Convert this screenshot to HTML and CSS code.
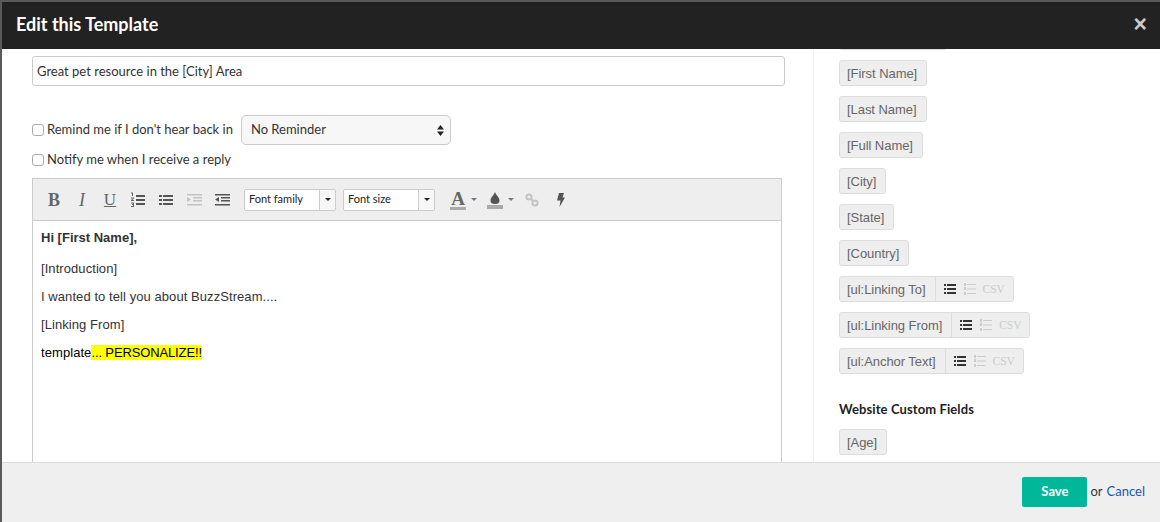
FILE: index.html
```html
<!DOCTYPE html>
<html lang="en">
<head>
<meta charset="utf-8">
<title>Edit this Template</title>
<link rel="stylesheet" href="styles.css">
</head>
<body>
<div class="modal">
  <header class="modal-head">
    <h1>Edit this Template</h1>
    <span class="close">×</span>
  </header>
  <div class="modal-body">
    <main class="main">
      <input class="subject" type="text" value="Great pet resource in the [City] Area">
      <div class="opt-row first">
        <label class="check"><input type="checkbox"><span>Remind me if I don't hear back in</span></label>
        <div class="select"><span>No Reminder</span>
          <svg class="updown" width="7" height="11" viewBox="0 0 7 11"><path d="M3.5 0 7 4.400H0zM3.500 11 0 6.600h7z" fill="#222"/></svg>
        </div>
      </div>
      <div class="opt-row second">
        <label class="check"><input type="checkbox"><span>Notify me when I receive a reply</span></label>
      </div>
      <div class="editor">
        <div class="toolbar">
          <span class="ti glyph bold">B</span>
          <span class="ti glyph ital">I</span>
          <span class="ti glyph under">U</span>
          <svg class="ti" width="16" height="16" viewBox="0 0 16 16" fill="#555"><path d="M6 3h9v2H6zM6 7h9v2H6zM6 11h9v2H6z"/><path d="M1 .5h2V4H2V1.500H1zM1 5.500h3v1L2.300 8H4v1H1V8l2-1.500H1zM1 10.500h3V15H1v-1h2v-1H2v-1h1v-.5H1z" fill="#666"/></svg>
          <svg class="ti" width="16" height="16" viewBox="0 0 16 16" fill="#555"><path d="M5 3h10v2H5zM5 7h10v2H5zM5 11h10v2H5zM1 3h3v2H1zM1 7h3v2H1zM1 11h3v2H1z"/></svg>
          <svg class="ti" width="16" height="16" viewBox="0 0 16 16" fill="#c4c4c4"><path d="M1 2h15v1.500H1zM7 5h9v1.500H7zM7 8h9v1.500H7zM1 12h15v1.500H1zM1 5l4 2.500L1 10z"/></svg>
          <svg class="ti" width="16" height="16" viewBox="0 0 16 16" fill="#555"><path d="M1 2h15v1.500H1zM7 5h9v1.500H7zM7 8h9v1.500H7zM1 12h15v1.500H1zM5 5 1 7.500 5 10z"/></svg>
          <div class="combo family"><span>Font family</span><b><i></i></b></div>
          <div class="combo size"><span>Font size</span><b><i></i></b></div>
          <span class="swatch text-color"><span class="serif-a">A</span></span>
          <i class="caret"></i>
          <svg class="drop" width="16" height="20" viewBox="0 0 16 20"><path d="M8 2C9 5 12.500 7.500 12.500 10.500a4.500 3.500 0 0 1-9 0C3.500 7.500 7 5 8 2z" fill="#555"/><rect y="15" width="16" height="4" fill="#aaa"/></svg>
          <i class="caret second-caret"></i>
          <svg class="link" width="14" height="14" viewBox="0 0 14 14" fill="none" stroke="#c4c4c4" stroke-width="2"><circle cx="4" cy="4" r="2.600"/><circle cx="10" cy="10" r="2.600"/><path d="m5.500 5.500 3 3"/></svg>
          <svg class="bolt" width="8" height="14" viewBox="0 0 8 14"><path d="M2 0h5L5.500 4.500H8L2.500 14 3.500 7.500H0z" fill="#555"/></svg>
        </div>
        <div class="content">
          <p class="hello">Hi [First Name],</p>
          <p>[Introduction]</p>
          <p>I wanted to tell you about BuzzStream....</p>
          <p>[Linking From]</p>
          <p class="black">template<mark>... PERSONALIZE!!</mark></p>
        </div>
      </div>
    </main>
    <aside class="side">
      <div class="tag clipped">[Email Address]</div>
      <div class="tag">[First Name]</div>
      <div class="tag">[Last Name]</div>
      <div class="tag">[Full Name]</div>
      <div class="tag">[City]</div>
      <div class="tag">[State]</div>
      <div class="tag">[Country]</div>
      <div class="tag list"><span class="name">[ul:Linking To]</span><span class="fmt"><svg width="12" height="10" viewBox="0 0 12 10" fill="#333"><path d="M0 0h2v2H0zM3 0h9v2H3zM0 4h2v2H0zM3 4h9v2H3zM0 8h2v2H0zM3 8h9v2H3z"/></svg><svg width="12" height="12" viewBox="0 0 12 12" fill="#ccc"><path d="M3 1h9v1H3zM3 5.500h9v1H3zM3 10h9v1H3zM0 0h2v3H0zM0 4h2v3H0zM0 9h2v3H0z"/></svg><em>CSV</em></span></div>
      <div class="tag list"><span class="name">[ul:Linking From]</span><span class="fmt"><svg width="12" height="10" viewBox="0 0 12 10" fill="#333"><path d="M0 0h2v2H0zM3 0h9v2H3zM0 4h2v2H0zM3 4h9v2H3zM0 8h2v2H0zM3 8h9v2H3z"/></svg><svg width="12" height="12" viewBox="0 0 12 12" fill="#ccc"><path d="M3 1h9v1H3zM3 5.500h9v1H3zM3 10h9v1H3zM0 0h2v3H0zM0 4h2v3H0zM0 9h2v3H0z"/></svg><em>CSV</em></span></div>
      <div class="tag list"><span class="name">[ul:Anchor Text]</span><span class="fmt"><svg width="12" height="10" viewBox="0 0 12 10" fill="#333"><path d="M0 0h2v2H0zM3 0h9v2H3zM0 4h2v2H0zM3 4h9v2H3zM0 8h2v2H0zM3 8h9v2H3z"/></svg><svg width="12" height="12" viewBox="0 0 12 12" fill="#ccc"><path d="M3 1h9v1H3zM3 5.500h9v1H3zM3 10h9v1H3zM0 0h2v3H0zM0 4h2v3H0zM0 9h2v3H0z"/></svg><em>CSV</em></span></div>
      <h2>Website Custom Fields</h2>
      <div class="tag">[Age]</div>
    </aside>
  </div>
  <footer class="modal-foot">
    <button class="save" type="button">Save</button>
    <span class="or">or <a href="#">Cancel</a></span>
  </footer>
</div>
</body>
</html>
```

FILE: styles.css
```css
* { box-sizing: border-box; }
html, body { margin: 0; height: 100%; overflow: hidden; }
body { background: #5a5a5a; padding: 2px 0 0 2px; font-family: Lato, "Open Sans", sans-serif; font-size: 13px; color: #333; }
.modal { display: flex; flex-direction: column; height: 520px; background: #fff; }
.modal-head { flex: none; height: 47px; background: #222; color: #fff; display: flex; align-items: center; justify-content: space-between; padding: 0 13px 3px 14px; }
.modal-head h1 { margin: 0; font-size: 18px; font-weight: 700; }
.close { font-family: "Liberation Sans", sans-serif; font-size: 23px; font-weight: 700; color: #ccc; line-height: 1; }
.modal-body { flex: none; height: 413px; display: flex; overflow: hidden; }
.main { flex: none; width: 812px; border-right: 1px solid #eee; padding: 7px 0 0 30px; }
.subject { display: block; width: 753px; height: 30px; border: 1px solid #ccc; border-radius: 3px; padding: 0 4px; font: 13px Lato, sans-serif; color: #333; }
.opt-row { display: flex; align-items: center; }
.opt-row.first { margin-top: 29px; height: 30px; }
.opt-row.second { margin-top: 4px; height: 22px; }
.check { display: flex; align-items: center; }
.check span { padding-bottom: 2px; }
.check input { appearance: none; margin: 0 3px 0 0; width: 12px; height: 12px; border: 1px solid #aaa; border-radius: 3px; background: #fff; }
.select { margin-left: 8px; width: 210px; height: 30px; border: 1px solid #ccc; border-radius: 5px; background: #f7f7f7; display: flex; align-items: center; justify-content: space-between; padding: 0 6px 0 9px; color: #333; }
.select span { padding-bottom: 2px; }
.editor { margin-top: 7px; width: 750px; height: 300px; border: 1px solid #ccc; }
.toolbar { height: 42px; background: #eee; border-bottom: 1px solid #ccc; display: flex; align-items: center; padding-left: 13px; }
.ti { margin-right: 12px; flex: none; }
.glyph { width: 16px; height: 18px; line-height: 18px; text-align: center; font-family: "Liberation Serif", serif; font-size: 18px; color: #666; }
.bold { font-weight: 700; }
.ital { font-style: italic; }
.under { text-decoration: underline; text-decoration-thickness: 1px; text-underline-offset: 1px; font-size: 17px; }
.combo { display: flex; height: 22px; width: 92px; border: 1px solid #ccc; border-radius: 2px; background: #fff; margin-right: 7px; font-size: 11px; color: #222; }
.combo.family { margin-left: 2px; }
.combo span { flex: 1; padding: 2px 0 0 4px; }
.combo b { width: 16px; border-left: 1px solid #ccc; background: #f7f7f7; display: flex; align-items: center; justify-content: center; }
.combo i, .caret { width: 0; height: 0; border: 3px solid transparent; border-top-color: #222; border-bottom: 0; }
.caret { border-top-color: #777; margin: 0 8px 0 5px; flex: none; }
.swatch { flex: none; width: 16px; height: 20px; margin-left: 8px; border-bottom: 3px solid #aaa; display: block; }
.serif-a { display: block; text-align: center; font: 700 19px/17px "Liberation Serif", serif; color: #666; }
.drop { flex: none; margin-left: 2px; }
.second-caret { margin-right: 11px; }
.link { flex: none; margin-right: 18px; }
.bolt { flex: none; }
.content { padding: 9px 8px 8px; font-family: "Liberation Sans", sans-serif; font-size: 13px; line-height: 16px; color: #333; letter-spacing: .07px; }
.content p { margin: 0 0 12px; }
.content .hello { font-weight: 700; margin-bottom: 15px; letter-spacing: 0; }
.black { color: #000; }
mark { background: #ff0; color: #000; letter-spacing: -.13px; }
.side { flex: 1; padding-left: 25px; margin-top: -25px; font-family: "Liberation Sans", sans-serif; }
.tag { display: table; height: 26px; margin-bottom: 10px; padding: 1px 9px 0 7px; line-height: 23px; border: 1px solid #ddd; border-radius: 3px; background: #eee; color: #666; font-size: 13px; letter-spacing: -.05px; }
.tag.list { display: flex; width: max-content; padding: 0; }
.name { padding: 1px 9px 0 7px; }
.fmt { display: flex; align-items: center; gap: 8px; border-left: 1px solid #ddd; padding: 0 8px; }
.fmt em { margin-left: -1px; font-family: "Liberation Serif", serif; font-style: normal; font-size: 11.5px; color: #ccc; }
.side h2 { margin: 27px 0 12px; font-family: Lato, sans-serif; font-size: 13px; font-weight: 700; line-height: 16px; color: #222; letter-spacing: .1px; }
.modal-foot { flex: none; height: 60px; background: #efefef; border-top: 1px solid #ddd; display: flex; align-items: center; justify-content: flex-end; padding: 0 15px 1px 0; }
.save { width: 65px; height: 30px; padding: 0 0 2px; border: 0; border-radius: 2px; background: #00b899; color: #fff; font: 700 13px Lato, sans-serif; }
.or { margin-left: 3px; padding-bottom: 2px; }
.or a { margin-left: 1px; color: #1a56a8; text-decoration: none; }
```
